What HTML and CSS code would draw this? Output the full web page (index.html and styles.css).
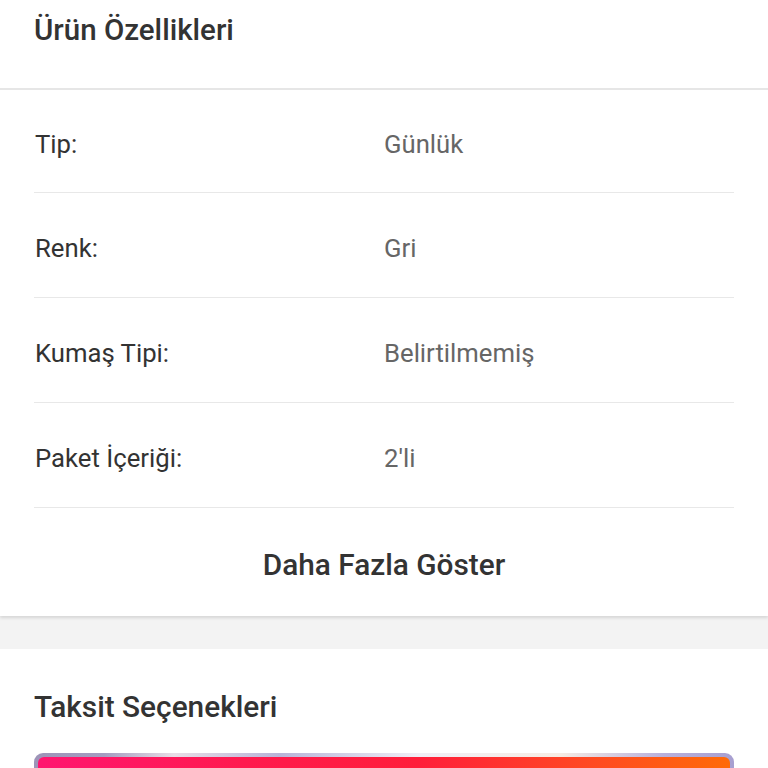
FILE: index.html
```html
<!DOCTYPE html>
<html lang="tr">
<head>
<meta charset="utf-8">
<link rel="stylesheet" href="styles.css">
</head>
<body>
<section class="card specs">
  <header class="card-head"><h2 class="card-title">Ürün Özellikleri</h2></header>
  <div class="rows">
    <div class="row"><span class="label">Tip:</span><span class="value">Günlük</span></div>
    <div class="row"><span class="label">Renk:</span><span class="value">Gri</span></div>
    <div class="row"><span class="label">Kumaş Tipi:</span><span class="value">Belirtilmemiş</span></div>
    <div class="row"><span class="label">Paket İçeriği:</span><span class="value">2'li</span></div>
  </div>
  <div class="more">Daha Fazla Göster</div>
</section>
<div class="gap"></div>
<section class="card installments">
  <h2 class="card-title title2">Taksit Seçenekleri</h2>
  <div class="bank-bar"><div class="bank-fill"></div></div>
</section>
</body>
</html>
```
FILE: styles.css
```css
html, body {
  margin: 0;
  padding: 0;
  background: #f3f3f3;
  font-family: Roboto, "Noto Sans", sans-serif;
  color: #333;
}
.card {
  background: #fff;
}
.specs {
  box-shadow: 0 2px 3px rgba(0,0,0,0.12);
  position: relative;
  z-index: 1;
}
.card-head {
  height: 88px;
  border-bottom: 2px solid #e6e6e6;
  box-sizing: content-box;
}
.card-title {
  margin: 0;
  padding: 12px 0 0 34px;
  font-size: 29.5px;
  font-weight: 500;
  line-height: 36px;
  color: #333;
}
.rows {
  padding: 0 34px;
}
.row {
  display: flex;
  align-items: center;
  box-sizing: border-box;
  padding-top: 5px;
  height: 105px;
  border-bottom: 1px solid #e8e8e8;
}
.row:first-child {
  height: 103px;
}
.label {
  width: 349px;
  padding-left: 1px;
  font-size: 25.7px;
  color: #333;
}
.value {
  font-size: 25.7px;
  color: #666;
}
.more {
  height: 108px;
  box-sizing: border-box;
  padding-top: 4px;
  display: flex;
  align-items: center;
  justify-content: center;
  font-size: 29.8px;
  font-weight: 500;
  color: #333;
}
.gap {
  height: 33px;
  background: #f3f3f3;
}
.installments {
  padding-top: 40px;
  height: 200px;
}
.title2 {
  padding-top: 0;
  font-size: 29.8px;
}
.bank-bar {
  margin: 28px 34px 0;
  height: 40px;
  padding: 4px 4px 0;
  border-radius: 9px;
  background: linear-gradient(90deg, #9d94b8 0%, #a49cc0 10%, #e8dde6 20%, #b8b4d8 35%, #f0eef6 55%, #f6ece4 75%, #b8b0dc 90%, #a79fd0 100%);
}
.bank-fill {
  height: 100%;
  border-radius: 6px 6px 0 0;
  background: linear-gradient(90deg, #ff1670 0%, #ff1a4e 30%, #ff1e3a 55%, #ff4a22 80%, #ff6a08 100%);
}
```
